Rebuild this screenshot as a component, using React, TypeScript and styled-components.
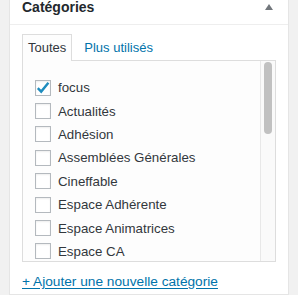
import styled, { createGlobalStyle } from "styled-components";

const GlobalStyle = createGlobalStyle`
  html, body {
    margin: 0;
    padding: 0;
    background: #f1f1f1;
    font-family: "Liberation Sans", Arial, sans-serif;
    font-size: 13px;
  }
`;

const Page = styled.div`
  padding: 0 9px;
  height: 295px;
  overflow: hidden;
`;

const Postbox = styled.div`
  background: #ffffff;
  border: 1px solid #e5e5e5;
  border-top: none;
  height: 100%;
  box-sizing: border-box;
`;

const Header = styled.div`
  display: flex;
  justify-content: space-between;
  align-items: flex-start;
  height: 24px;
  padding: 0 15px 0 12px;
  border-bottom: 1px solid #eeeeee;
`;

const Title = styled.h2`
  margin: 0;
  font-size: 14px;
  font-weight: 700;
  line-height: 15px;
  color: #23282d;
`;

const Toggle = styled.svg`
  margin-top: 4px;
  display: block;
`;

const Inside = styled.div`
  padding: 9px 12px 0;
`;

const Tabs = styled.ul`
  display: flex;
  align-items: flex-end;
  gap: 6px;
  list-style: none;
  margin: 0;
  padding: 0;
`;

const Tab = styled.li<{ $active?: boolean }>`
  position: relative;
  z-index: 1;
  margin-bottom: -1px;
  padding: 3px 5px 4px 5px;
  line-height: 19px;
  border: 1px solid ${(p) => (p.$active ? "#dddddd" : "transparent")};
  border-bottom: none;
  background: ${(p) => (p.$active ? "#fdfdfd" : "transparent")};
  color: ${(p) => (p.$active ? "#32373c" : "#0073aa")};
`;

const Panel = styled.div`
  display: flex;
  height: 200px;
  border: 1px solid #dddddd;
  background: #fdfdfd;
  overflow: hidden;
`;

const Checklist = styled.ul`
  flex: 1;
  min-width: 0;
  overflow: hidden;
  list-style: none;
  margin: 0;
  padding: 15px 0 0 12px;
`;

const ScrollTrack = styled.div`
  flex: none;
  width: 14px;
  padding-top: 1px;
  background: #fafafa;
  border-left: 1px solid #e8e8e8;
`;

const ScrollThumb = styled.div`
  width: 8px;
  height: 72px;
  margin-left: 3px;
  border-radius: 4px;
  background: #c1c1c1;
`;

const Item = styled.li`
  display: flex;
  align-items: center;
  height: 23.4px;
  font-size: 13.3px;
  color: #32373c;
  white-space: nowrap;
`;

const Box = styled.span`
  display: flex;
  align-items: center;
  justify-content: center;
  flex: none;
  width: 16px;
  height: 16px;
  box-sizing: border-box;
  margin-right: 7px;
  border: 1px solid #b4b9be;
  background: #ffffff;
  box-shadow: inset 0 1px 2px rgba(0, 0, 0, 0.07);
`;

const AddLink = styled.a`
  display: inline-block;
  margin-top: 10px;
  font-size: 13.7px;
  line-height: 19px;
  color: #0073aa;
  text-decoration: underline;
  text-underline-offset: 2px;
`;

const categories = [
  { name: "focus", checked: true },
  { name: "Actualités" },
  { name: "Adhésion" },
  { name: "Assemblées Générales" },
  { name: "Cineffable" },
  { name: "Espace Adhérente" },
  { name: "Espace Animatrices" },
  { name: "Espace CA" },
];

function Check() {
  return (
    <svg width="14" height="14" viewBox="0 0 14 14">
      <path
        d="M1.8 7.2 L5.2 10.6 L12.4 1.8"
        fill="none"
        stroke="#1e8cbe"
        strokeWidth="2.4"
        strokeLinejoin="miter"
      />
    </svg>
  );
}

function App() {
  return (
    <Page>
      <GlobalStyle />
      <Postbox>
        <Header>
          <Title>Catégories</Title>
          <Toggle width="8" height="6" viewBox="0 0 8 6">
            <polygon points="0,6 4,0 8,6" fill="#72777c" />
          </Toggle>
        </Header>
        <Inside>
          <Tabs>
            <Tab $active>Toutes</Tab>
            <Tab>Plus utilisés</Tab>
          </Tabs>
          <Panel>
            <Checklist>
              {categories.map((c) => (
                <Item key={c.name}>
                  <Box>{c.checked && <Check />}</Box>
                  {c.name}
                </Item>
              ))}
            </Checklist>
            <ScrollTrack>
              <ScrollThumb />
            </ScrollTrack>
          </Panel>
          <AddLink href="#">+ Ajouter une nouvelle catégorie</AddLink>
        </Inside>
      </Postbox>
    </Page>
  );
}

export default App;
